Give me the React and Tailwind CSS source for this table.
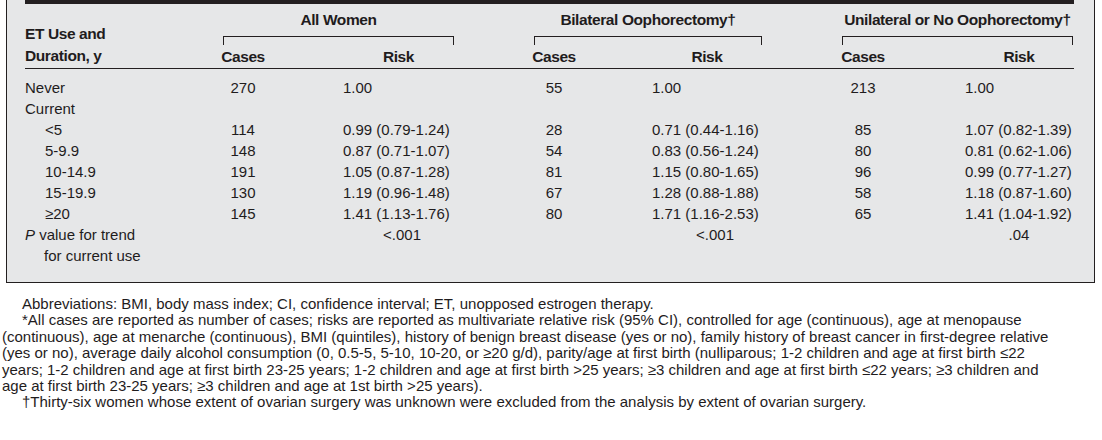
import React from 'react';

// column grid: label | cases | gap | risk | gap | cases | gap | risk | gap | cases | gap | risk
const COLS = 'grid grid-cols-[198px_40px_80px_111px_80px_40px_78px_110px_80px_42px_81px_108px]';

const ROWS = [
  { label: 'Never', data: ['270', '1.00', '55', '1.00', '213', '1.00'] },
  { label: 'Current', data: null },
  { label: '<5', indent: true, data: ['114', '0.99 (0.79-1.24)', '28', '0.71 (0.44-1.16)', '85', '1.07 (0.82-1.39)'] },
  { label: '5-9.9', indent: true, data: ['148', '0.87 (0.71-1.07)', '54', '0.83 (0.56-1.24)', '80', '0.81 (0.62-1.06)'] },
  { label: '10-14.9', indent: true, data: ['191', '1.05 (0.87-1.28)', '81', '1.15 (0.80-1.65)', '96', '0.99 (0.77-1.27)'] },
  { label: '15-19.9', indent: true, data: ['130', '1.19 (0.96-1.48)', '67', '1.28 (0.88-1.88)', '58', '1.18 (0.87-1.60)'] },
  { label: '\u226520', indent: true, data: ['145', '1.41 (1.13-1.76)', '80', '1.71 (1.16-2.53)', '65', '1.41 (1.04-1.92)'] },
];

const GROUPS = [
  { title: 'All Women', start: 'col-start-2' },
  { title: 'Bilateral Oophorectomy\u2020', start: 'col-start-6' },
  { title: 'Unilateral or No Oophorectomy\u2020', start: 'col-start-10' },
];

const NOTES = [
  { indent: true, text: 'Abbreviations: BMI, body mass index; CI, confidence interval; ET, unopposed estrogen therapy.' },
  { indent: true, text: '*All cases are reported as number of cases; risks are reported as multivariate relative risk (95% CI), controlled for age (continuous), age at menopause' },
  { text: '(continuous), age at menarche (continuous), BMI (quintiles), history of benign breast disease (yes or no), family history of breast cancer in first-degree relative' },
  { text: '(yes or no), average daily alcohol consumption (0, 0.5-5, 5-10, 10-20, or \u226520 g/d), parity/age at first birth (nulliparous; 1-2 children and age at first birth \u226422' },
  { text: 'years; 1-2 children and age at first birth 23-25 years; 1-2 children and age at first birth >25 years; \u22653 children and age at first birth \u226422 years; \u22653 children and' },
  { text: 'age at first birth 23-25 years; \u22653 children and age at 1st birth >25 years).' },
  { indent: true, text: '\u2020Thirty-six women whose extent of ovarian surgery was unknown were excluded from the analysis by extent of ovarian surgery.' },
];

const DataRow = ({ row }) => {
  const d = row.data || ['', '', '', '', '', ''];
  return (
    <div className={`${COLS} leading-[21px] whitespace-nowrap`}>
      <div className={row.indent ? 'pl-[20px]' : ''}>{row.label}</div>
      <div className="text-center">{d[0]}</div>
      <div />
      <div>{d[1]}</div>
      <div />
      <div className="text-center">{d[2]}</div>
      <div />
      <div>{d[3]}</div>
      <div />
      <div className="text-center">{d[4]}</div>
      <div />
      <div>{d[5]}</div>
    </div>
  );
};

const App = () => {
  return (
    <div className="w-[1102px] h-[440px] bg-white text-[#1f1c1d] font-['Liberation_Sans',Arial,sans-serif] text-[15px] overflow-hidden">
      {/* Table box */}
      <div className="ml-[6px] w-[1089px] bg-[#e6e7e8] border-l border-r border-b border-[#231f20] pl-[18px] pr-[20px] pb-[16px]">
        <div className="h-[4px] bg-[#231f20]" />

        {/* Header */}
        <div className={`${COLS} grid-rows-[31px_10px_23px] font-bold text-[15.5px] tracking-[-0.4px] border-b border-[#231f20]`}>
          <div className="row-span-3 flex flex-col justify-end leading-[22px] pb-px">
            <div>ET Use and</div>
            <div>Duration, y</div>
          </div>
          {GROUPS.map(g => (
            <div key={g.title} className={`${g.start} col-span-3 row-start-1 flex items-center justify-center whitespace-nowrap`}>
              {g.title}
            </div>
          ))}
          {GROUPS.map(g => (
            <div key={g.title + '-b'} className={`${g.start} col-span-3 row-start-2`}>
              <div className="mt-px h-[9px] border-t border-l border-r border-[#231f20]" />
            </div>
          ))}
          <div className="col-start-2 row-start-3 flex items-center justify-center">Cases</div>
          <div className="col-start-4 row-start-3 flex items-center justify-center">Risk</div>
          <div className="col-start-6 row-start-3 flex items-center justify-center">Cases</div>
          <div className="col-start-8 row-start-3 flex items-center justify-center">Risk</div>
          <div className="col-start-10 row-start-3 flex items-center justify-center">Cases</div>
          <div className="col-start-12 row-start-3 flex items-center justify-center">Risk</div>
        </div>

        {/* Body */}
        <div className="pt-[8px]">
          {ROWS.map(r => (
            <DataRow key={r.label} row={r} />
          ))}
          <div className={`${COLS} leading-[21px] whitespace-nowrap`}>
            <div>
              <div><span className="italic">P</span> value for trend</div>
              <div className="pl-[19px]">for current use</div>
            </div>
            <div className="col-start-4 text-center pl-[7px]">{'<.001'}</div>
            <div className="col-start-8 text-center pl-[16px]">{'<.001'}</div>
            <div className="col-start-12 text-center">.04</div>
          </div>
        </div>
      </div>

      {/* Footnotes */}
      <div className="mt-[13px] pl-[2px] leading-[16.4px] whitespace-nowrap">
        {NOTES.map((n, i) => (
          <div key={i} className={n.indent ? 'pl-[20px]' : ''}>{n.text}</div>
        ))}
      </div>
    </div>
  );
};

export default App;
